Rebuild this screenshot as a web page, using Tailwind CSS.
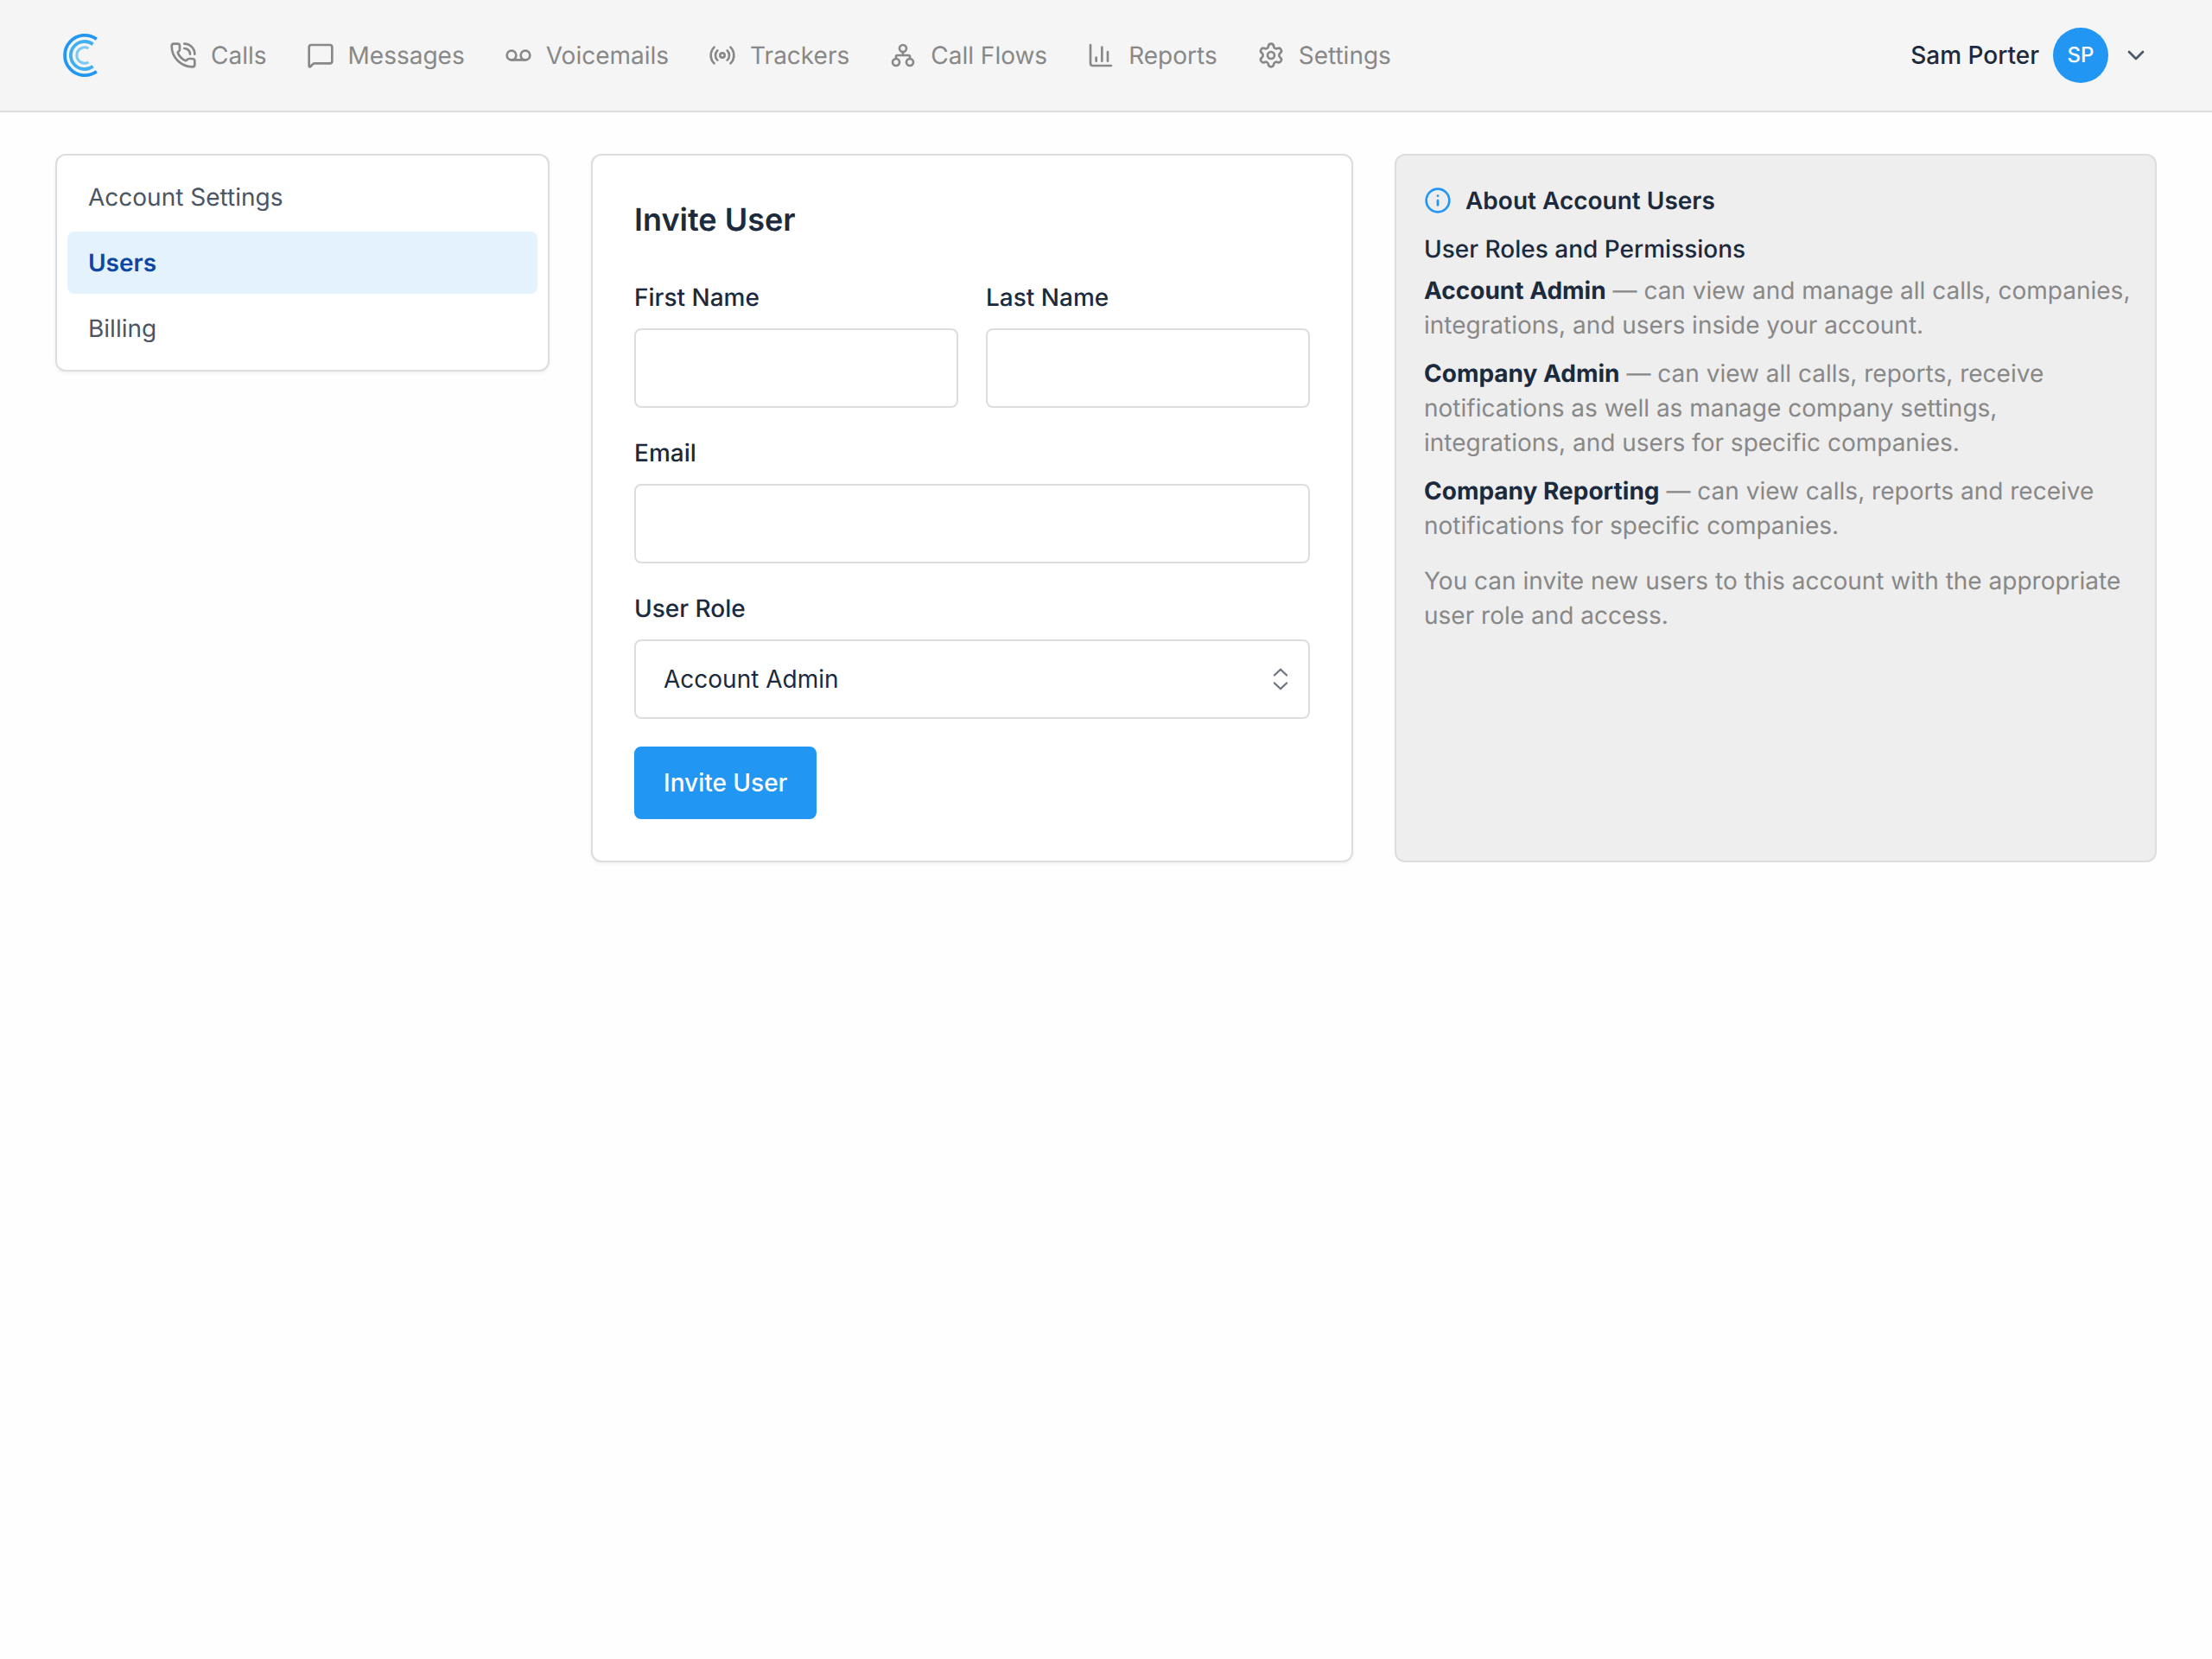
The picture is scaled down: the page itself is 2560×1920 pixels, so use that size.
<!DOCTYPE html>
<html lang="en">
<head>
<meta charset="utf-8">
<meta name="viewport" content="width=device-width, initial-scale=1">
<title>Invite User</title>
<script src="https://cdn.jsdelivr.net/npm/@tailwindcss/browser@4"></script>
</head>
<body class="min-h-screen bg-[#fefefe] font-['Inter',sans-serif] text-[28px] leading-10 text-[#1b2a3d] [text-rendering:geometricPrecision]">
<header class="flex h-[130px] items-center justify-between border-b-2 border-[#dddddd] bg-[#f5f5f5] px-16">
  <div class="flex items-center gap-16">
    <a href="#" aria-label="Home">
      <svg class="h-16 w-[68px]" viewBox="0 0 68 64" fill="none">
        <path d="M47.8 13.2A23.2 23.2 0 1 0 47.8 50.8" stroke="#2196f3" stroke-width="3.8"/>
        <path d="M43.6 19.3A16 16 0 1 0 43.6 44.7" stroke="#42aff0" stroke-width="3.8"/>
        <path d="M38.4 23.9A9.2 9.2 0 1 0 38.4 40.1" stroke="#7cc8f5" stroke-width="3"/>
      </svg>
    </a>
    <nav class="flex items-center gap-[46px] text-[#888888]">
      <a href="#" class="flex items-center gap-4">
        <svg class="size-8" viewBox="0 0 24 24" fill="none" stroke="currentColor" stroke-width="2" stroke-linecap="round" stroke-linejoin="round"><path d="M13 2a9 9 0 0 1 9 9"/><path d="M13 6a5 5 0 0 1 5 5"/><path d="M13.832 16.568a1 1 0 0 0 1.213-.303l.355-.465A2 2 0 0 1 17 15h3a2 2 0 0 1 2 2v3a2 2 0 0 1-2 2A18 18 0 0 1 2 4a2 2 0 0 1 2-2h3a2 2 0 0 1 2 2v3a2 2 0 0 1-.8 1.6l-.468.351a1 1 0 0 0-.292 1.233 14 14 0 0 0 6.392 6.384"/></svg>
        Calls
      </a>
      <a href="#" class="flex items-center gap-4">
        <svg class="size-8" viewBox="0 0 24 24" fill="none" stroke="currentColor" stroke-width="2" stroke-linecap="round" stroke-linejoin="round"><path d="M22 17a2 2 0 0 1-2 2H6.828a2 2 0 0 0-1.414.586l-2.202 2.202A.71.71 0 0 1 2 21.286V5a2 2 0 0 1 2-2h16a2 2 0 0 1 2 2z"/></svg>
        Messages
      </a>
      <a href="#" class="flex items-center gap-4">
        <svg class="size-8" viewBox="0 0 24 24" fill="none" stroke="currentColor" stroke-width="2" stroke-linecap="round" stroke-linejoin="round"><circle cx="6" cy="12" r="4"/><circle cx="18" cy="12" r="4"/><path d="M6 16h12"/></svg>
        Voicemails
      </a>
      <a href="#" class="flex items-center gap-4">
        <svg class="size-8" viewBox="0 0 24 24" fill="none" stroke="currentColor" stroke-width="2" stroke-linecap="round" stroke-linejoin="round"><path d="M16.247 7.761a6 6 0 0 1 0 8.478"/><path d="M19.075 4.933a10 10 0 0 1 0 14.134"/><path d="M4.925 19.067a10 10 0 0 1 0-14.134"/><path d="M7.753 16.239a6 6 0 0 1 0-8.478"/><circle cx="12" cy="12" r="2"/></svg>
        Trackers
      </a>
      <a href="#" class="flex items-center gap-4">
        <svg class="size-8" viewBox="0 0 24 24" fill="none" stroke="currentColor" stroke-width="2" stroke-linecap="round" stroke-linejoin="round"><circle cx="12" cy="6" r="3"/><circle cx="6" cy="18" r="3"/><circle cx="18" cy="18" r="3"/><path d="M12 9v3"/><path d="M6 15v-2a1 1 0 0 1 1-1h10a1 1 0 0 1 1 1v2"/></svg>
        Call Flows
      </a>
      <a href="#" class="flex items-center gap-4">
        <svg class="size-8" viewBox="0 0 24 24" fill="none" stroke="currentColor" stroke-width="2" stroke-linecap="round" stroke-linejoin="round"><path d="M3 3v16a2 2 0 0 0 2 2h16"/><path d="M18 17V9"/><path d="M13 17V5"/><path d="M8 17v-3"/></svg>
        Reports
      </a>
      <a href="#" class="flex items-center gap-4">
        <svg class="size-8" viewBox="0 0 24 24" fill="none" stroke="currentColor" stroke-width="2" stroke-linecap="round" stroke-linejoin="round"><path d="M9.671 4.136a2.34 2.34 0 0 1 4.659 0 2.34 2.34 0 0 0 3.319 1.915 2.34 2.34 0 0 1 2.33 4.033 2.34 2.34 0 0 0 0 3.831 2.34 2.34 0 0 1-2.33 4.033 2.34 2.34 0 0 0-3.319 1.915 2.34 2.34 0 0 1-4.659 0 2.34 2.34 0 0 0-3.32-1.915 2.34 2.34 0 0 1-2.33-4.033 2.34 2.34 0 0 0 0-3.831A2.34 2.34 0 0 1 6.35 6.051a2.34 2.34 0 0 0 3.319-1.915"/><circle cx="12" cy="12" r="3"/></svg>
        Settings
      </a>
    </nav>
  </div>
  <button type="button" class="flex items-center gap-4 pr-2 font-medium">
    Sam Porter
    <span class="flex size-16 items-center justify-center rounded-full bg-[#2196f3] text-2xl text-white">SP</span>
    <svg class="size-8 text-[#4b5968]" viewBox="0 0 24 24" fill="none" stroke="currentColor" stroke-width="2" stroke-linecap="round" stroke-linejoin="round"><path d="m6 9 6 6 6-6"/></svg>
  </button>
</header>

<main class="grid grid-cols-4 items-start gap-12 px-16 py-12">
  <nav class="flex flex-col gap-1 rounded-xl border-2 border-[#dddddd] bg-white p-3 text-[#4b5563] shadow-[0_2px_4px_rgba(0,0,0,0.05)]">
    <a href="#" class="rounded-lg px-6 py-4">Account Settings</a>
    <a href="#" aria-current="page" class="rounded-lg bg-[#e3f2fd] px-6 py-4 font-semibold text-[#0d47a1]">Users</a>
    <a href="#" class="rounded-lg px-6 py-4">Billing</a>
  </nav>

  <div class="col-span-3 grid grid-cols-2 gap-12">
    <form class="rounded-xl border-2 border-[#dddddd] bg-white p-12 shadow-[0_2px_4px_rgba(0,0,0,0.05)]">
      <h1 class="mb-11 text-4xl leading-13 font-semibold">Invite User</h1>
      <div class="flex flex-col gap-8">
        <div class="grid grid-cols-2 gap-8">
          <div class="flex flex-col gap-4">
            <label for="first" class="font-medium">First Name</label>
            <input id="first" type="text" class="h-23 w-full rounded-lg border-2 border-[#dddddd] bg-white px-8">
          </div>
          <div class="flex flex-col gap-4">
            <label for="last" class="font-medium">Last Name</label>
            <input id="last" type="text" class="h-23 w-full rounded-lg border-2 border-[#dddddd] bg-white px-8">
          </div>
        </div>
        <div class="flex flex-col gap-4">
          <label for="email" class="font-medium">Email</label>
          <input id="email" type="email" class="h-23 w-full rounded-lg border-2 border-[#dddddd] bg-white px-8">
        </div>
        <div class="flex flex-col gap-4">
          <label for="role" class="font-medium">User Role</label>
          <div class="relative">
            <select id="role" class="block h-23 w-full appearance-none rounded-lg border-2 border-[#dddddd] bg-white px-8">
              <option>Account Admin</option>
              <option>Company Admin</option>
              <option>Company Reporting</option>
            </select>
            <svg class="pointer-events-none absolute inset-y-0 right-4 my-auto size-9 text-[#6b7280]" viewBox="0 0 24 24" fill="none" stroke="currentColor" stroke-width="1.5" stroke-linecap="round" stroke-linejoin="round"><path d="m7.25 9 4.75-4.500 4.75 4.500"/><path d="m7.25 15 4.75 4.500 4.75-4.500"/></svg>
          </div>
        </div>
        <button type="submit" class="h-21 self-start rounded-lg border-2 border-[#2196f3] bg-[#2196f3] px-8 font-medium text-white">Invite User</button>
      </div>
    </form>

    <aside class="rounded-xl border-2 border-[#dddddd] bg-[#eeeeee] py-8 pr-6 pl-8 text-[#888888]">
      <h2 class="flex items-center gap-4 font-semibold text-[#1b2a3d]">
        <svg class="size-8 text-[#2196f3]" viewBox="0 0 24 24" fill="none" stroke="currentColor" stroke-width="2" stroke-linecap="round" stroke-linejoin="round"><circle cx="12" cy="12" r="10"/><path d="M12 16v-4"/><path d="M12 8h.01"/></svg>
        About Account Users
      </h2>
      <h3 class="mt-4 font-medium text-[#1b2a3d]">User Roles and Permissions</h3>
      <div class="mt-2 flex flex-col gap-4">
        <p><strong class="font-bold text-[#1b2a3d]">Account Admin</strong> — can view and manage all calls, companies, integrations, and users inside your account.</p>
        <p><strong class="font-bold text-[#1b2a3d]">Company Admin</strong> — can view all calls, reports, receive notifications as well as manage company settings, integrations, and users for specific companies.</p>
        <p><strong class="font-bold text-[#1b2a3d]">Company Reporting</strong> — can view calls, reports and receive notifications for specific companies.</p>
      </div>
      <p class="mt-6">You can invite new users to this account with the appropriate user role and access.</p>
    </aside>
  </div>
</main>
</body>
</html>
